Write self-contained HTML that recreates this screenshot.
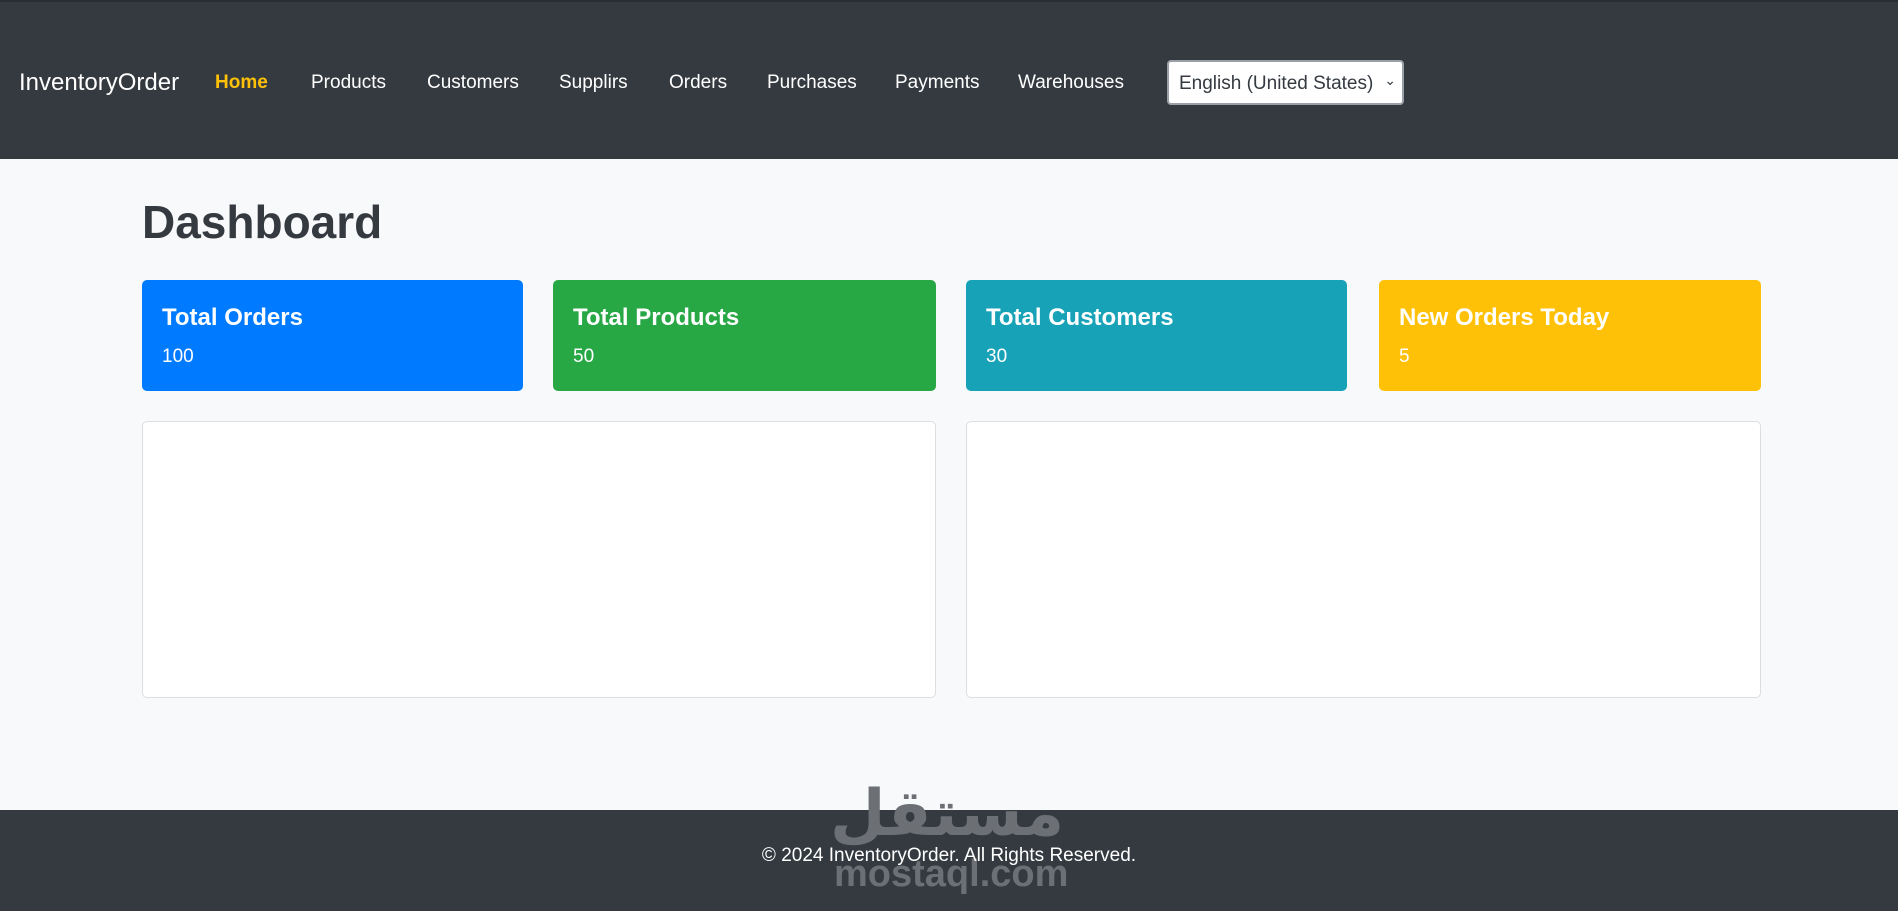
<!DOCTYPE html>
<html><head><meta charset="utf-8"><style>
*{box-sizing:border-box;margin:0;padding:0}
body{width:1898px;height:911px;overflow:hidden;background:#f8f9fa;font-family:"Liberation Sans","DejaVu Sans",sans-serif;position:relative;color:#343a40}
.nav{position:absolute;top:0;left:0;width:1898px;height:159px;background:#343a40;border-top:2px solid #2a2e33}
.nav a{position:absolute;top:70px;color:#fff;font-size:19px;text-decoration:none;white-space:nowrap}
.brand{font-size:24px!important;top:67px!important}
.sel{position:absolute;left:1167px;top:58px;width:237px;height:45px;background:#fff;border:2px solid #9aa0a6;border-radius:4px;font-size:19px;color:#343a40;padding:11px 0 0 10px}
.sel span{position:absolute;right:6px;top:10px;font-size:14px}
h1{position:absolute;left:142px;top:195px;font-size:46px;font-weight:bold;color:#343a40;letter-spacing:0}
.card{position:absolute;top:280px;height:111px;border-radius:5px;color:#fff;padding:0 20px}
.card b{position:absolute;top:24px;left:20px;font-size:24px;font-weight:bold;white-space:nowrap}
.card i{position:absolute;top:66px;left:20px;font-size:19px;font-style:normal}
.box{position:absolute;top:421px;height:277px;background:#fff;border:1px solid #dcdee0;border-radius:5px}
.foot{position:absolute;top:810px;left:0;width:1898px;height:101px;background:#343a40}
.wm1{position:absolute;left:830px;top:782px;font-size:64px;color:#6c6f74;font-weight:bold;font-family:"DejaVu Sans",sans-serif;line-height:1}
.wm2{position:absolute;left:834px;top:855px;font-size:38px;color:#6c6f74;font-weight:bold;line-height:1}
.ft{position:absolute;top:845px;left:0;width:1898px;text-align:center;color:#fff;font-size:19px}
</style></head><body>
<div class="nav">
<a class="brand" style="left:19px">InventoryOrder</a>
<a style="left:215px;color:#ffc107;font-weight:bold">Home</a>
<a style="left:311px">Products</a>
<a style="left:427px">Customers</a>
<a style="left:559px">Supplirs</a>
<a style="left:669px">Orders</a>
<a style="left:767px">Purchases</a>
<a style="left:895px">Payments</a>
<a style="left:1018px">Warehouses</a>
<div class="sel">English (United States)<span>&#8964;</span></div>
</div>
<h1>Dashboard</h1>
<div class="card" style="left:142px;width:381px;background:#007bff"><b>Total Orders</b><i>100</i></div>
<div class="card" style="left:553px;width:383px;background:#28a745"><b>Total Products</b><i>50</i></div>
<div class="card" style="left:966px;width:381px;background:#17a2b8"><b>Total Customers</b><i>30</i></div>
<div class="card" style="left:1379px;width:382px;background:#ffc107"><b>New Orders Today</b><i>5</i></div>
<div class="box" style="left:142px;width:794px"></div>
<div class="box" style="left:966px;width:795px"></div>
<div class="foot"></div>
<div class="wm1">مستقل</div>
<div class="wm2">mostaql.com</div>
<div class="ft">© 2024 InventoryOrder. All Rights Reserved.</div>
</body></html>
